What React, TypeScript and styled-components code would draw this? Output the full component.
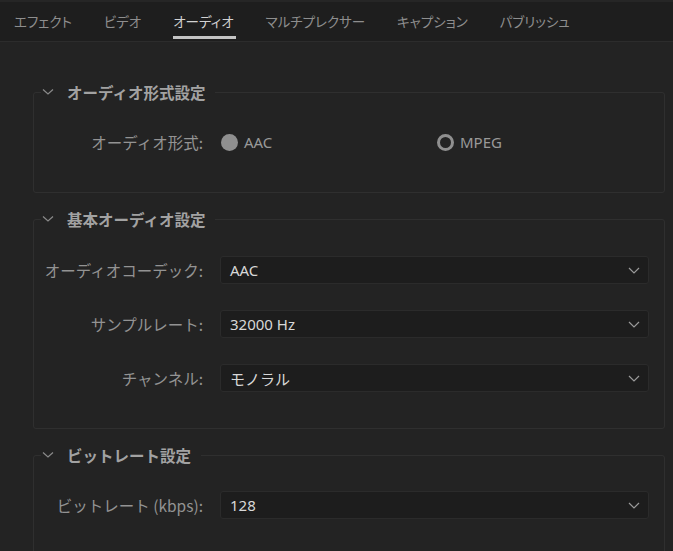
import React, { FunctionComponent } from 'react'
import styled, { createGlobalStyle } from 'styled-components'

const GlobalStyle = createGlobalStyle`
  html, body {
    margin: 0;
    padding: 0;
    background: #232323;
    font-family: "Noto Sans CJK JP", "Noto Sans", sans-serif;
    overflow: hidden;
  }
`

const Page = styled.div`
  width: 673px;
  height: 551px;
  background: #232323;
  overflow: hidden;
`

const TabBar = styled.div`
  height: 42px;
  background: #1e1e1e;
  border-top: 2px solid #262626;
  border-bottom: 1px solid #2c2c2c;
  box-sizing: border-box;
  display: flex;
  align-items: stretch;
  padding-left: 14px;
  white-space: nowrap;
  overflow: hidden;
`

const Tab = styled.div<{ $active?: boolean }>`
  position: relative;
  display: flex;
  align-items: center;
  margin-right: 32px;
  padding-bottom: 2px;
  font-size: 13.5px;
  font-feature-settings: "palt";
  color: ${p => (p.$active ? '#d2d2d2' : '#8e8e8e')};
  flex-shrink: 0;

  &:after {
    content: '';
    display: ${p => (p.$active ? 'block' : 'none')};
    position: absolute;
    left: 0;
    right: -2px;
    bottom: 2px;
    height: 3px;
    background: #c4c4c4;
  }
`

const Body = styled.div`
  padding: 40px 8px 0 33px;
  display: flex;
  flex-direction: column;
  gap: 16px;
`

const Group = styled.fieldset<{ $pad: number }>`
  margin: 0;
  border: 1px solid #2f2f2f;
  border-radius: 3px;
  padding: ${p => p.$pad}px 15px 36px 0;
  min-width: 0;
`

const Legend = styled.legend`
  margin-left: 7px;
  padding: 0 10px 0 0;
  display: flex;
  align-items: center;
  height: 20px;
  font-size: 15.5px;
  font-weight: 700;
  color: #a2a2a2;
`

const Chevron = styled.svg`
  width: 12px;
  height: 8px;
  margin: 0 13px 0 1px;
`

const Rows = styled.div`
  display: flex;
  flex-direction: column;
  gap: 26px;
`

const Row = styled.div`
  display: grid;
  grid-template-columns: 169px 1fr;
  column-gap: 17px;
  align-items: center;
  height: 28px;
`

const Label = styled.div`
  text-align: right;
  font-size: 15.5px;
  color: #939393;
  white-space: nowrap;
`

const Select = styled.div`
  height: 28px;
  box-sizing: border-box;
  background: #1d1d1d;
  border: 1px solid #2b2b2b;
  border-radius: 3px;
  display: flex;
  align-items: center;
  justify-content: space-between;
  padding: 0 8px 0 9px;
  font-family: "Noto Sans", "Noto Sans CJK JP", sans-serif;
  font-size: 15px;
  color: #d8d8d8;
`

const Radios = styled.div`
  display: flex;
  align-items: center;
`

const RadioOption = styled.div`
  width: 215px;
  display: flex;
  align-items: center;
  gap: 6px;
  padding-left: 1px;
  font-family: "Noto Sans", sans-serif;
  font-size: 15px;
  color: #999;
`

const RadioDot = styled.span<{ $checked?: boolean }>`
  width: 17px;
  height: 17px;
  border-radius: 50%;
  box-sizing: border-box;
  background: ${p => (p.$checked ? '#8f8f8f' : 'transparent')};
  border: ${p => (p.$checked ? 'none' : '3px solid #8f8f8f')};
`

const Caret: FunctionComponent = () => (
  <svg width="12" height="7" viewBox="0 0 12 7">
    <path d="M1 1 L6 6 L11 1" fill="none" stroke="#9a9a9a" strokeWidth="1.2" />
  </svg>
)

const GroupTitle: FunctionComponent<{ title: string }> = ({ title }) => (
  <Legend>
    <Chevron viewBox="0 0 12 8">
      <path d="M1 1.5 L6 6 L11 1.5" fill="none" stroke="#8a8a8a" strokeWidth="1.2" />
    </Chevron>
    {title}
  </Legend>
)

const Dropdown: FunctionComponent<{ label: string; value: string }> = ({ label, value }) => (
  <Row>
    <Label>{label}</Label>
    <Select>
      <span>{value}</span>
      <Caret />
    </Select>
  </Row>
)

const tabs = ['エフェクト', 'ビデオ', 'オーディオ', 'マルチプレクサー', 'キャプション', 'パブリッシュ']

export default function App() {
  return (
    <Page>
      <GlobalStyle />
      <TabBar>
        {tabs.map(t => (
          <Tab key={t} $active={t === 'オーディオ'}>{t}</Tab>
        ))}
      </TabBar>
      <Body>
        <Group $pad={26}>
          <GroupTitle title="オーディオ形式設定" />
          <Row>
            <Label>オーディオ形式:</Label>
            <Radios>
              <RadioOption>
                <RadioDot $checked />
                AAC
              </RadioOption>
              <RadioOption>
                <RadioDot />
                MPEG
              </RadioOption>
            </Radios>
          </Row>
        </Group>
        <Group $pad={27}>
          <GroupTitle title="基本オーディオ設定" />
          <Rows>
            <Dropdown label="オーディオコーデック:" value="AAC" />
            <Dropdown label="サンプルレート:" value="32000 Hz" />
            <Dropdown label="チャンネル:" value="モノラル" />
          </Rows>
        </Group>
        <Group $pad={26}>
          <GroupTitle title="ビットレート設定" />
          <Dropdown label="ビットレート (kbps):" value="128" />
        </Group>
      </Body>
    </Page>
  )
}
